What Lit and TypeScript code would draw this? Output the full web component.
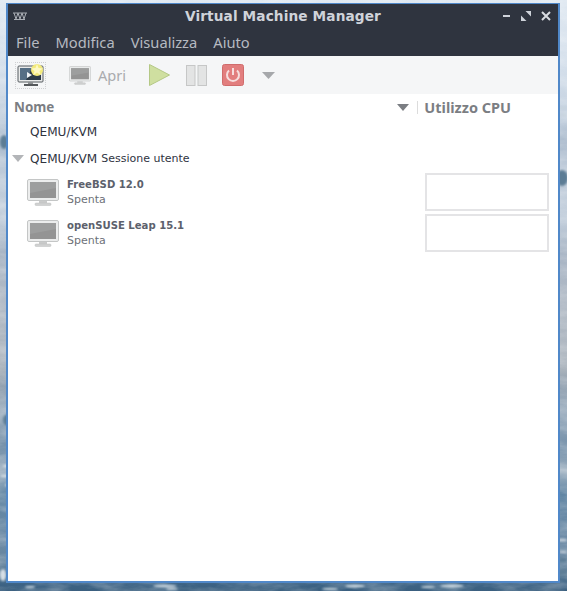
import { LitElement, html, css, svg } from "lit";
import { customElement } from "lit/decorators.js";

const monitor = (w: number, h: number) => html`<svg width=${w} height=${h} viewBox="0 0 32 27">
  <rect x="0.5" y="0.5" width="31" height="21" rx="1.5" fill="#eceded" stroke="#c4c6c6"/>
  <rect x="3" y="3" width="26" height="16" fill="#949494"/>
  <path d="M3 3h26v6L3 14z" fill="#9d9e9e"/>
  <rect x="12" y="22" width="8" height="2" fill="#c9caca"/>
  <rect x="8" y="24" width="16" height="2.5" rx="1" fill="#d0d1d1" stroke="#bdbebe" stroke-width=".5"/>
</svg>`;

const foam = (items: number[][], fill: string) => items.map(([x, y, w, h]) => svg`<ellipse cx=${x} cy=${y} rx=${w} ry=${h} fill=${fill}/>`);

@customElement("app-root")
export class AppRoot extends LitElement {
  static styles = css`
    :host {
      display: block;
      width: 567px;
      height: 591px;
      position: relative;
      overflow: hidden;
      background: linear-gradient(180deg, #dfe8f1 0, #d3deea 70px, #c3d0de 120px, #a9b9cb 140px, #bcc9d8 165px, #c2cedb 220px, #a5b2c2 255px, #b2bbc6 300px, #a9b2bb 370px, #8c9cac 385px, #9fb0c0 410px, #6f8ca6 450px, #a4b5c4 470px, #5f84a2 495px, #6d8ba6 540px, #5f7f98 575px, #3d6384 584px, #3a5f7f 591px);
      font-family: "Noto Sans", "Open Sans", sans-serif;
    }
    .wall {
      position: absolute;
      inset: 0;
    }
    .window {
      position: absolute;
      left: 6px;
      top: 3px;
      width: 550px;
      height: 577px;
      border: 2px solid #5088c9;
      border-top-width: 1px;
      background: #fff;
      display: flex;
      flex-direction: column;
    }
    .titlebar {
      height: 25px;
      padding-bottom: 1px;
      box-sizing: border-box;
      flex: none;
      background: #2f343f;
      color: #cfd3d9;
      display: grid;
      grid-template-columns: 60px 1fr 60px;
      align-items: center;
    }
    .wmicon {
      padding-left: 5px;
      display: flex;
    }
    .title {
      text-align: center;
      font: bold 13.7px "DejaVu Sans", sans-serif;
      color: #cfd3da;
      letter-spacing: 0.1px;
    }
    .wmbtns {
      display: flex;
      justify-content: flex-end;
      gap: 10px;
      padding-right: 7px;
    }
    .menubar {
      height: 27px;
      padding-bottom: 1px;
      box-sizing: border-box;
      flex: none;
      background: #2f343f;
      color: #b6bac1;
      display: flex;
      align-items: center;
      gap: 16px;
      padding-left: 8px;
      font-size: 14.7px;
    }
    .toolbar {
      height: 38px;
      flex: none;
      background: #f5f6f7;
      display: flex;
      align-items: center;
      padding-left: 7px;
      box-sizing: border-box;
    }
    .newbtn {
      width: 29px;
      height: 25px;
      border: 1px dotted #cfd0d2;
      display: flex;
      align-items: center;
      justify-content: center;
      margin-right: 23px;
    }
    .open {
      display: flex;
      align-items: center;
      gap: 7px;
      color: #a9abae;
      font-size: 14.6px;
      margin-right: 23px;
    }
    .t-play { margin-right: 16px; display: flex; }
    .t-pause { margin-right: 15px; display: flex; }
    .t-power { margin-right: 18px; display: flex; }
    .t-more { display: flex; }
    .header {
      height: 26px;
      flex: none;
      display: grid;
      grid-template-columns: 1fr auto auto;
      align-items: center;
      padding-left: 6px;
      color: #7b7e83;
      font: bold 13.4px "Noto Sans", sans-serif;
    }
    .sort {
      display: flex;
      margin-right: 8px;
    }
    .cpuhead {
      border-left: 1px solid #dcdcdc;
      height: 13px;
      line-height: 13px;
      padding: 0 47px 0 6px;
      font-size: 14.5px;
    }
    .group {
      height: 27px;
      box-sizing: border-box;
      display: flex;
      align-items: center;
      gap: 4px;
      color: #2f343f;
      font: 11px "DejaVu Sans", sans-serif;
      padding-left: 22px;
      flex: none;
    }
    .group.first { height: 25px; padding-bottom: 2px; }
    .hv { font-size: 12.1px; }
    .expander {
      display: flex;
      width: 18px;
      margin: 0 -4px 0 -18px;
    }
    .vm {
      height: 41px;
      flex: none;
      display: grid;
      grid-template-columns: 32px 1fr 124px;
      column-gap: 8px;
      align-items: center;
      padding: 0 9px 0 19px;
    }
    .vm-text {
      display: flex;
      flex-direction: column;
      gap: 3px;
      line-height: 14px;
    }
    .vm-name {
      font: bold 10.1px "DejaVu Sans", sans-serif;
      color: #5c616c;
    }
    .vm-state {
      font: 11px "DejaVu Sans", sans-serif;
      color: #6d7178;
    }
    .spark {
      width: 120px;
      height: 34px;
      margin-bottom: 2px;
      border: 2px solid #e4e4e6;
      background: #fff;
    }
    .wall .soft { filter: blur(1px); }
  `;

  render() {
    return html`
      <svg class="wall" width="567" height="591" viewBox="0 0 567 591">
        <defs>
          <filter id="sea" x="0" y="0" width="100%" height="100%">
            <feTurbulence type="fractalNoise" baseFrequency="0.03 0.09" numOctaves="4" seed="7"/>
            <feColorMatrix values="0 0 0 0 1  0 0 0 0 1  0 0 0 0 1  1.6 0 0 0 -0.55"/>
          </filter>
        </defs>
        <rect width="567" height="591" filter="url(#sea)" opacity="0.35"/>
        <g class="soft">
          ${foam([[8, 466, 5, 1.5], [6, 476, 6, 1.5], [10, 485, 5, 1.5], [10, 520, 2, 5], [3, 575, 3, 6]], "#d6dfe6")}
          ${foam([[562, 540, 5, 1.5], [563, 552, 4, 1], [562, 108, 5, 1], [562, 115, 5, 1]], "#c8d3dd")}
          ${foam([[8, 420, 5, 6], [562, 178, 6, 8], [4, 142, 4, 7], [563, 560, 4, 2], [563, 572, 4, 2]], "#5d7d95")}
          ${foam([[165, 586, 12, 1.5], [172, 589, 6, 1], [355, 586, 10, 1.5], [330, 589, 8, 1], [452, 586, 12, 1.5], [428, 587, 7, 1], [30, 587, 5, 1]], "#cfdbe3")}
        </g>
      </svg>
      <div class="window">
        <div class="titlebar">
          <div class="wmicon">
            <svg width="14" height="8" viewBox="0 0 14 8" fill="none" stroke="#a9adb4" stroke-width="1">
              <path d="M0 1h14M1 1l2 6 2-6 2 6 2-6 2 6 2-6M1 7.500h11"/>
            </svg>
          </div>
          <div class="title">Virtual Machine Manager</div>
          <div class="wmbtns">
            <svg width="9" height="10" viewBox="0 0 9 10"><rect x="1" y="4" width="7" height="2" fill="#cfd3da"/></svg>
            <svg width="10" height="10" viewBox="0 0 10 10" fill="#cfd3da"><path d="M4.500 0H10v5.500zM0 4.500 5.500 10H0z"/></svg>
            <svg width="10" height="10" viewBox="0 0 10 10" stroke="#d8dbe0" stroke-width="2"><path d="M1 1l8 8M9 1l-8 8"/></svg>
          </div>
        </div>
        <div class="menubar"><span>File</span><span>Modifica</span><span>Visualizza</span><span>Aiuto</span></div>
        <div class="toolbar">
          <div class="newbtn">
            <svg width="28" height="23" viewBox="0 0 28 23">
              <rect x="1" y="2" width="25" height="16" rx="1" fill="#e9eaea" stroke="#555a5e"/>
              <rect x="3" y="4" width="21" height="12" fill="#2c3a46"/>
              <path d="M3 4h12L9 16H3z" fill="#566f85"/>
              <path d="M10 8l5 3-5 3z" fill="#eef2f4"/>
              <rect x="11" y="18" width="5" height="2" fill="#8d9092"/>
              <rect x="7" y="20" width="14" height="2" fill="#55585b"/>
              <circle cx="20" cy="6" r="6" fill="#f3ea7c"/>
              <path d="M20 0l1.500 4 4.500.5-3.500 2.500 1 4-3.500-2.500-3.500 2.500 1-4-3.500-2.500 4.500-.5z" fill="#fdf9c4"/>
            </svg>
          </div>
          <div class="open">${monitor(22, 19)}<span>Apri</span></div>
          <div class="t-play">
            <svg width="21" height="22" viewBox="0 0 21 22"><path d="M.5.500 20.500 11 .5 21.500z" fill="#cfdfa0" stroke="#b4c886"/></svg>
          </div>
          <div class="t-pause">
            <svg width="21" height="21" viewBox="0 0 21 21" fill="#e3e4e4" stroke="#c6c7c7"><rect x=".5" y=".5" width="8.500" height="20"/><rect x="12" y=".5" width="8.500" height="20"/></svg>
          </div>
          <div class="t-power">
            <svg width="22" height="22" viewBox="0 0 22 22"><rect x=".5" y=".5" width="21" height="21" rx="2" fill="#e27e7e" stroke="#d06c6c"/><path d="M7 6.500a6 6 0 1 0 8 0" fill="none" stroke="#f7dede" stroke-width="2"/><path d="M11 4v7" stroke="#f7dede" stroke-width="2"/></svg>
          </div>
          <div class="t-more">
            <svg width="13" height="7" viewBox="0 0 13 7"><path d="M0 0h13L6.500 7z" fill="#a6a8ab"/></svg>
          </div>
        </div>
        <div class="header">
          <span>Nome</span>
          <span class="sort"><svg width="12" height="7" viewBox="0 0 12 7"><path d="M0 0h12L6 7z" fill="#7b7e83"/></svg></span>
          <span class="cpuhead">Utilizzo CPU</span>
        </div>
        <div>
          <div class="group first"><span class="hv">QEMU/KVM</span></div>
          <div class="group">
            <span class="expander"><svg width="12" height="7" viewBox="0 0 12 7"><path d="M0 0h12L6 7z" fill="#b3b5b8"/></svg></span>
            <span class="hv">QEMU/KVM</span><span>Sessione utente</span>
          </div>
          <div class="vm">
            ${monitor(32, 27)}
            <div class="vm-text"><span class="vm-name">FreeBSD 12.0</span><span class="vm-state">Spenta</span></div>
            <div class="spark"></div>
          </div>
          <div class="vm">
            ${monitor(32, 27)}
            <div class="vm-text"><span class="vm-name">openSUSE Leap 15.1</span><span class="vm-state">Spenta</span></div>
            <div class="spark"></div>
          </div>
        </div>
      </div>
    `;
  }
}
